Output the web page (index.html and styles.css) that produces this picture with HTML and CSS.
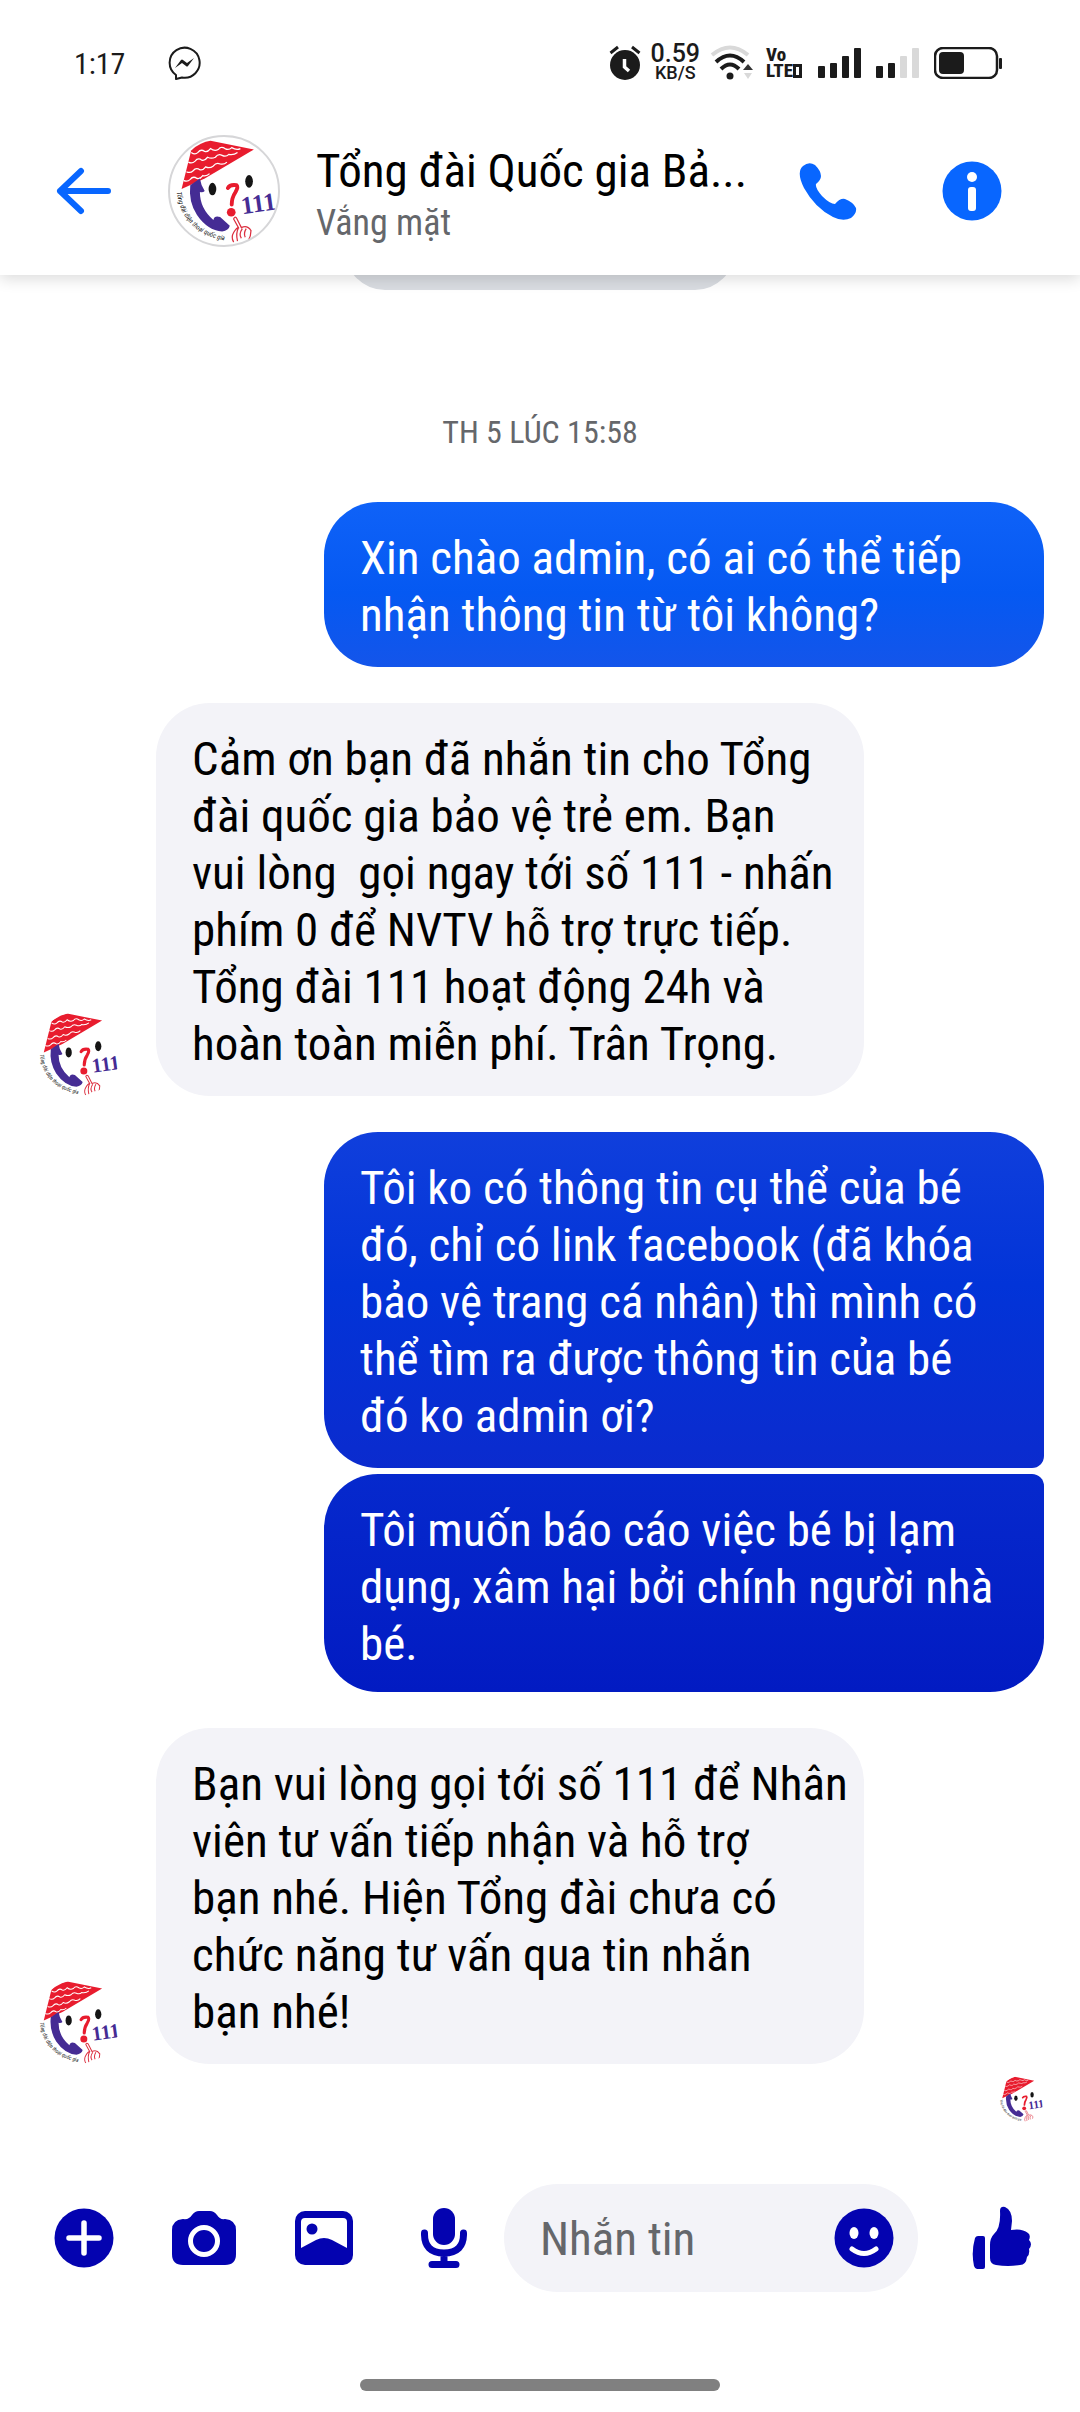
FILE: index.html
```html
<!DOCTYPE html>
<html lang="vi">
<head>
<meta charset="utf-8">
<meta name="viewport" content="width=device-width, initial-scale=1">
<title>Tổng đài Quốc gia Bảo vệ trẻ em</title>
<link rel="stylesheet" href="styles.css">
</head>
<body>
<div class="screen">
  <header class="top">
    <div class="status">
      <span class="clock">1:17</span>
      <svg class="messenger" width="34" height="34" viewBox="0 0 34 34" aria-hidden="true">
        <path d="M8 29A15 15 0 1 1 14 31.500L8 33Z" fill="none" stroke="#1b1b1b" stroke-width="2" stroke-linejoin="round"/>
        <path d="M7 22 13 14Q14 13 15 14L19 17 26 12 20 20Q19 21 18 20L14 17Z" fill="#1b1b1b"/>
      </svg>
      <div class="status-right">
        <svg width="32" height="36" viewBox="0 0 32 36" aria-hidden="true">
          <circle cx="16" cy="20" r="15" fill="#1b1b1b"/>
          <path d="M1.500 8 9 2M23 2l7.500 6" stroke="#1b1b1b" stroke-width="3" fill="none"/>
          <path d="M15.500 14v8l4.500 4" stroke="#fff" stroke-width="3.500" fill="none"/>
        </svg>
        <span class="speed"><b>0.59</b><small>KB/S</small></span>
        <svg class="wifi" width="44" height="36" viewBox="0 0 44 36" aria-hidden="true">
          <g fill="none" stroke-width="4">
            <path d="M2 10Q20-5 38 10" stroke="#d9d9d9"/>
            <path d="M6 17Q20 4 34 17" stroke="#1b1b1b"/>
            <path d="M11 24Q20 15 29 24" stroke="#1b1b1b"/>
          </g>
          <circle cx="20" cy="31" r="3.500" fill="#1b1b1b"/>
          <path d="M33 25 38 19 43 25Z" fill="#333"/>
          <path d="M34 28h8l-4 6Z" fill="#d9d9d9"/>
        </svg>
        <span class="volte"><span>Vo</span><span>LTE<i></i></span></span>
        <svg class="signal" width="44" height="32" viewBox="0 0 44 32" fill="#1b1b1b" aria-hidden="true">
          <rect x="0" y="19" width="7" height="12" rx="1"/><rect x="12" y="16" width="7" height="15" rx="1"/><rect x="24" y="9" width="7" height="22" rx="1"/><rect x="36" y="1" width="7" height="30" rx="1"/>
        </svg>
        <svg class="signal" width="44" height="32" viewBox="0 0 44 32" fill="#1b1b1b" aria-hidden="true">
          <rect x="0" y="19" width="7" height="12" rx="1"/><rect x="12" y="16" width="7" height="15" rx="1"/><g fill="#d9d9d9"><rect x="24" y="9" width="7" height="22" rx="1"/><rect x="36" y="1" width="7" height="30" rx="1"/></g>
        </svg>
        <svg width="68" height="32" viewBox="0 0 68 32" aria-hidden="true">
          <rect x="1" y="1" width="62" height="30" rx="8" fill="none" stroke="#1b1b1b" stroke-width="2.500"/>
          <rect x="5" y="5" width="25" height="22" rx="4" fill="#1b1b1b"/>
          <rect x="65" y="11" width="3" height="11" rx="1" fill="#1b1b1b"/>
        </svg>
      </div>
    </div>
    <div class="appbar">
      <button class="icon-button" aria-label="Quay lại">
        <svg width="56" height="48" viewBox="0 0 56 48" fill="none" stroke="#0866ff" stroke-width="6" stroke-linecap="round" stroke-linejoin="round"><path d="M25 4 4 24 25 44M4 24H52"/></svg>
      </button>
      <svg class="avatar avatar-large" viewBox="0 0 112 112" role="img" aria-label="Ảnh đại diện">
        <g id="logo">
          <circle cx="56" cy="56" r="55" fill="#fff"/>
          <path d="M12 54 22 14Q32 5 42 4L87 13 36 43Z" fill="#e81c2e"/>
          <g fill="none" stroke="#fff" stroke-width="1.3">
            <path d="M22 16q4 3 7 0q3 -4 7 -1q3 1 6 -3q4 3 8 1q3 -4 7 -1q4 2 7 -1q5 3 9 1"/>
            <path d="M19 26q4 2 7 -1q3 -4 7 -1q3 1 6 -3q4 2 8 0q3 -4 7 -2q4 2 7 -1q5 1 9 -2"/>
            <path d="M17 36q4 2 7 -1q3 -4 7 -1q3 1 6 -3q4 2 8 -1q3 -4 7 -2q4 1 7 -2"/>
            <path d="M14 45q4 2 7 -1q3 -4 7 -1q3 1 6 -3q4 1 7 -2"/>
          </g>
          <path d="M31 43Q32 50 36 56Q34 58 31 57Q31 74 45 86Q46 81 52 83L62 92Q61 97 54 98Q39 97 28 81Q19 67 21 50Z" fill="#452c94"/>
          <ellipse cx="44" cy="54" rx="4" ry="6.500" fill="#151515"/>
          <ellipse cx="82" cy="46" rx="4" ry="6.500" fill="#151515"/>
          <path d="M60 53Q62 49 69 50Q71 52 68 57Q64 63 64 70" fill="none" stroke="#e81c2e" stroke-width="4" stroke-linecap="round"/>
          <circle cx="63.500" cy="78" r="4.500" fill="#e81c2e"/>
          <text x="75" y="80" transform="rotate(-8 75 80)" class="logo-number">111</text>
          <path d="M66 99Q69 94 71 94L66 85Q67 82 69 84L74 94Q80 91 84 97Q84 103 81 108M71 94Q68 100 70 108M75 95Q71 101 74 105M79 95Q76 100 78 104M66 99Q63 104 66 109" fill="none" stroke="#dc3040" stroke-width="1.300"/>
          <path id="logo-arc" d="M7 57Q12 100 60 108" fill="none"/>
          <text class="logo-caption"><textPath href="#logo-arc">Tổng đài điện thoại quốc gia</textPath></text>
        </g>
      </svg>
      <div class="title">
        <h1>Tổng đài Quốc gia Bả...</h1>
        <p>Vắng mặt</p>
      </div>
      <button class="icon-button" aria-label="Gọi">
        <svg width="58" height="58" viewBox="0 0 58 58"><path d="M4 4Q10-1 16 3Q22 9 22 14Q22 18 17 22Q16 26 23 34Q31 42 36 42Q41 36 46 37Q54 40 57 46Q58 51 52 56Q44 60 34 55Q16 46 5 26Q-3 10 4 4Z" fill="#0866ff"/></svg>
      </button>
      <button class="icon-button info" aria-label="Thông tin">
        <svg width="60" height="60" viewBox="0 0 60 60"><circle cx="30" cy="30" r="29.500" fill="#0866ff"/><circle cx="30" cy="16" r="5" fill="#fff"/><rect x="26" y="26" width="8" height="24" rx="3" fill="#fff"/></svg>
      </button>
    </div>
  </header>

  <main class="thread">
    <div class="notice-edge"></div>
    <time class="stamp">TH 5 LÚC 15:58</time>
    <div class="row sent"><p class="bubble tone-1">Xin chào admin, có ai có thể tiếp<br>nhận thông tin từ tôi không?</p></div>
    <div class="row received">
      <svg class="avatar" viewBox="2 2 108 108" aria-hidden="true"><use href="#logo"/></svg>
      <p class="bubble">Cảm ơn bạn đã nhắn tin cho Tổng<br>đài quốc gia bảo vệ trẻ em. Bạn<br>vui lòng&nbsp; gọi ngay tới số 111 - nhấn<br>phím 0 để NVTV hỗ trợ trực tiếp.<br>Tổng đài 111 hoạt động 24h và<br>hoàn toàn miễn phí. Trân Trọng.</p>
    </div>
    <div class="row sent group">
      <p class="bubble tone-2">Tôi ko có thông tin cụ thể của bé<br>đó, chỉ có link facebook (đã khóa<br>bảo vệ trang cá nhân) thì mình có<br>thể tìm ra được thông tin của bé<br>đó ko admin ơi?</p>
      <p class="bubble tone-3">Tôi muốn báo cáo việc bé bị lạm<br>dụng, xâm hại bởi chính người nhà<br>bé.</p>
    </div>
    <div class="row received">
      <svg class="avatar" viewBox="2 2 108 108" aria-hidden="true"><use href="#logo"/></svg>
      <p class="bubble">Bạn vui lòng gọi tới số 111 để Nhân<br>viên tư vấn tiếp nhận và hỗ trợ<br>bạn nhé. Hiện Tổng đài chưa có<br>chức năng tư vấn qua tin nhắn<br>bạn nhé!</p>
    </div>
    <svg class="avatar avatar-seen" viewBox="2 2 108 108" role="img" aria-label="Đã xem"><use href="#logo"/></svg>
  </main>

  <form class="composer">
    <button type="button" class="icon-button" aria-label="Thêm">
      <svg width="60" height="60" viewBox="0 0 60 60"><circle cx="30" cy="30" r="29.500" fill="#0403b0"/><path d="M30 15V45M15 30H45" stroke="#fff" stroke-width="5.500" stroke-linecap="round"/></svg>
    </button>
    <button type="button" class="icon-button" aria-label="Máy ảnh">
      <svg width="64" height="54" viewBox="0 0 64 54"><path d="M11 8Q17 9 20 4Q23 0 27 0H38Q42 0 45 4Q48 9 53 8Q64 9 64 19V43Q64 54 53 54H11Q0 54 0 43V19Q0 9 11 8Z" fill="#0403b0"/><circle cx="32" cy="30" r="13.500" fill="#0403b0" stroke="#fff" stroke-width="5"/></svg>
    </button>
    <button type="button" class="icon-button" aria-label="Ảnh">
      <svg width="58" height="54" viewBox="0 0 58 54"><rect width="58" height="54" rx="10" fill="#0403b0"/><path d="M6 11Q6 7 10 7H48Q52 7 52 11V37L37 29Q29 25 21 29L6 37Z" fill="#fff"/><circle cx="17" cy="18" r="5.500" fill="#0403b0"/></svg>
    </button>
    <button type="button" class="icon-button" aria-label="Ghi âm">
      <svg width="46" height="60" viewBox="0 0 46 60"><rect x="12" y="0" width="22" height="37" rx="11" fill="#0403b0"/><path d="M3.500 25Q3 45 23 45Q43 45 42.500 25M23 45V56M11 56.500H35" fill="none" stroke="#0403b0" stroke-width="7" stroke-linecap="round"/></svg>
    </button>
    <div class="field">
      <input type="text" placeholder="Nhắn tin" aria-label="Nhắn tin">
      <button type="button" class="emoji" aria-label="Biểu tượng cảm xúc">
        <svg width="60" height="60" viewBox="0 0 60 60"><circle cx="30" cy="30" r="29.500" fill="#0403b0"/><ellipse cx="20" cy="25" rx="4.500" ry="6" fill="#fff"/><ellipse cx="40" cy="25" rx="4.500" ry="6" fill="#fff"/><path d="M18 41Q30 50 42 41" fill="none" stroke="#fff" stroke-width="5" stroke-linecap="round"/></svg>
      </button>
    </div>
    <button type="button" class="icon-button like" aria-label="Thích">
      <svg width="60" height="64" viewBox="0 0 60 64" fill="#0403b0"><path d="M3 32Q4 30 6 30H11Q13 30 13 32V61Q13 63 11 63H5Q3 63 2 60Q-1 46 3 32Z"/><path d="M18 39Q18 32 22 28Q29 22 28 5Q28 0 33 1Q40 4 40 15L39 24Q50 22 56 27Q59 29 57 34Q61 38 57 43Q58 48 55 51Q54 59 48 59Q36 61 24 59Q18 58 18 52Z"/></svg>
    </button>
  </form>
  <div class="handle"></div>
</div>
</body>
</html>
```
FILE: styles.css
```css
* { box-sizing: border-box; }

body {
  margin: 0;
  background: #fff;
  color: #000;
  font-family: "Roboto Condensed", Roboto, "Liberation Sans", sans-serif;
}

h1, p { margin: 0; font-weight: 400; }

button {
  padding: 0;
  border: 0;
  background: none;
}

svg { display: block; flex: none; }

.logo-number { font: 700 26px "Liberation Serif", serif; fill: #452c94; }
.logo-caption { font: italic 7px "Roboto Condensed", Roboto, sans-serif; fill: #222; }

.screen {
  display: flex;
  flex-direction: column;
  min-height: 100vh;
}

/* Header */
.top {
  position: relative;
  z-index: 1;
  padding-bottom: 24px;
  background: #fff;
  box-shadow: 0 4px 14px rgba(0, 0, 0, .14);
}

.status {
  display: flex;
  align-items: center;
  height: 126px;
  padding: 0 78px 0 74px;
  color: #1b1b1b;
}

.clock { width: 94px; font-size: 30px; }

.status-right { display: flex; align-items: center; margin-left: auto; }

.speed {
  display: flex;
  flex-direction: column;
  align-items: center;
  margin: 0 10px;
  font-family: Roboto, sans-serif;
  font-weight: 500;
}
.speed b { font-size: 25px; line-height: 20px; font-weight: 500; }
.speed small { font-size: 18px; line-height: 18px; }

.volte {
  display: flex;
  flex-direction: column;
  margin: 0 16px 0 12px;
  font-size: 19px;
  line-height: 16px;
  font-weight: 800;
}
.volte span { display: flex; align-items: center; }
.volte i { width: 9px; height: 14px; border: 3px solid #1b1b1b; }

.signal { margin-right: 14px; }

.appbar {
  display: flex;
  align-items: center;
  height: 125px;
  padding: 5px 48px 0 24px;
}

.icon-button {
  display: flex;
  flex: none;
  align-items: center;
  justify-content: center;
  width: 120px;
  height: 108px;
}
.info { margin-left: 24px; }

.avatar { width: 84px; height: 84px; border-radius: 50%; }
.avatar-large {
  width: 112px;
  height: 112px;
  margin: 0 36px 0 24px;
  border: 2px solid #d6d6d8;
}

.title { flex: 1; min-width: 0; padding-top: 8px; }
.title h1 { font-size: 47px; line-height: 56px; white-space: nowrap; }
.title p { color: #65676b; font-size: 36px; line-height: 48px; }

/* Messages */
.thread {
  display: flex;
  flex: 1;
  flex-direction: column;
  padding: 0 36px;
  overflow: hidden;
}

.notice-edge {
  flex: none;
  align-self: center;
  width: 390px;
  max-width: 100%;
  height: 80px;
  margin-top: -65px;
  border-radius: 40px;
  background: #d9dce1;
}

.stamp {
  margin: 120px 0 48px;
  color: #65676b;
  font-size: 32px;
  line-height: 44px;
  text-align: center;
}

.row { display: flex; margin-bottom: 36px; }
.sent { justify-content: flex-end; }
.received { align-items: flex-end; gap: 36px; }
.received:last-of-type { margin-bottom: 12px; }

.group { flex-direction: column; align-items: flex-end; gap: 6px; }

.bubble {
  width: 100%;
  max-width: 708px;
  padding: 27px 12px 24px 36px;
  border-radius: 54px;
  background: #f3f3f8;
  font-size: 47px;
  line-height: 57px;
}
.sent .bubble { max-width: 720px; color: #fff; }
.sent .tone-1 { background: linear-gradient(#0f62f8, #0559f2 55%, #1455ea); }
.sent .tone-2 { border-bottom-right-radius: 12px; background: linear-gradient(#103fdc, #0234d8 45%, #0b2bce); }
.sent .tone-3 { padding-bottom: 20px; border-top-right-radius: 12px; background: linear-gradient(#0629cd, #021bc2); }

.avatar-seen { align-self: flex-end; width: 46px; height: 46px; }

/* Composer */
.composer {
  display: flex;
  align-items: center;
  padding: 0 18px 0 24px;
}

.field {
  display: flex;
  flex: 1;
  align-items: center;
  min-width: 0;
  height: 108px;
  padding: 0 24px 0 36px;
  border-radius: 54px;
  background: #f3f3f8;
}
.field input {
  flex: 1;
  min-width: 0;
  padding: 0;
  border: 0;
  outline: 0;
  background: none;
  font: inherit;
  font-size: 47px;
}
.field input::placeholder { color: #65676b; opacity: 1; }

.like { margin-left: 24px; }

.handle {
  align-self: center;
  width: 360px;
  height: 12px;
  margin: 87px 0 21px;
  border-radius: 6px;
  background: #808080;
}
```
